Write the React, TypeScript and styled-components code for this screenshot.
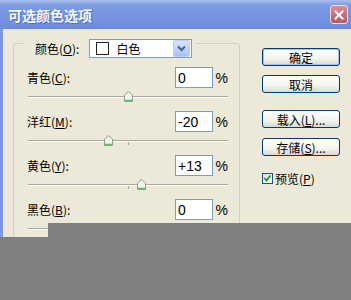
import styled, { createGlobalStyle } from 'styled-components';

const GlobalStyle = createGlobalStyle`
  html, body {
    margin: 0;
    padding: 0;
    background: #808080;
  }
  body {
    width: 351px;
    height: 300px;
    overflow: hidden;
    font-family: "Noto Sans CJK SC", "Liberation Sans", sans-serif;
  }
`;

const channels = [
  { name: '青色', key: 'C', text: '0', value: 0 },
  { name: '洋红', key: 'M', text: '-20', value: -20 },
  { name: '黄色', key: 'Y', text: '+13', value: 13 },
  { name: '黑色', key: 'B', text: '0', value: 0 },
];

const App = () => {
  return (
    <Screen>
      <GlobalStyle />
      <Window>
        <TitleBar>
          <Title>可选颜色选项</Title>
          <CloseButton>
            <svg width="10" height="10" viewBox="0 0 10 10">
              <path d="M1.5 1.5 L8.5 8.5 M8.5 1.5 L1.5 8.5" stroke="#fff" strokeWidth="2" strokeLinecap="square" />
            </svg>
          </CloseButton>
        </TitleBar>
        <Frame>
          <GroupBox>
            <Legend>
              <Label>
                颜色(<U>O</U>):
              </Label>
              <Select>
                <Swatch />
                <SelectText>白色</SelectText>
                <SelectArrow>
                  <svg width="9" height="7" viewBox="0 0 9 7">
                    <path d="M1 1.5 L4.5 5 L8 1.5" stroke="#4D6185" strokeWidth="2" fill="none" />
                  </svg>
                </SelectArrow>
              </Select>
            </Legend>
            <Rows>
              {channels.map((c) => (
                <Row key={c.key}>
                  <TopLine>
                    <Label>
                      {c.name}(<U>{c.key}</U>):
                    </Label>
                    <NumberInput readOnly value={c.text} />
                    <Percent>%</Percent>
                  </TopLine>
                  <Slider>
                    <Tick />
                    <Thumb style={{ left: `${c.value + 100 - 4.5}px` }}>
                      <svg width="9" height="11" viewBox="0 0 9 11">
                        <path d="M0.5 4 L4.5 0.5 L8.5 4 L8.5 10.5 L0.5 10.5 Z" fill="#EEF3EA" stroke="#8CA08C" />
                        <path d="M1 9.5 H8" stroke="#5CC05C" strokeWidth="1.5" />
                      </svg>
                    </Thumb>
                  </Slider>
                </Row>
              ))}
            </Rows>
          </GroupBox>
          <Side>
            <Button $isDefault $top={5}>确定</Button>
            <Button $top={9}>取消</Button>
            <Button $top={17}>
              载入(<U>L</U>)...
            </Button>
            <Button $top={10}>
              存储(<U>S</U>)...
            </Button>
            <CheckRow>
              <CheckBox>
                <svg width="9" height="9" viewBox="0 0 9 9">
                  <path d="M1.5 4 L3.5 6.5 L7.5 1.5" stroke="#21A121" strokeWidth="2" fill="none" />
                </svg>
              </CheckBox>
              <span>
                预览(<U>P</U>)
              </span>
            </CheckRow>
          </Side>
        </Frame>
      </Window>
      <Cover />
    </Screen>
  );
};

/////////////////////////////////////////////////////////////////////////////////////////

const Screen = styled.div`
  position: relative;
  width: 351px;
  height: 300px;
  overflow: hidden;
`;

const Window = styled.div`
  width: 351px;
  height: 237px;
  display: flex;
  flex-direction: column;
  background: #ece9d8;
`;

const TitleBar = styled.div`
  height: 29px;
  flex-shrink: 0;
  display: flex;
  align-items: center;
  justify-content: space-between;
  padding: 0 3px 0 8px;
  box-sizing: border-box;
  background: linear-gradient(
    to bottom,
    #a9c0f0 0%,
    #7d99e2 18%,
    #7593e0 60%,
    #6d8bdc 100%
  );
`;

const Title = styled.span`
  color: #f4f7fd;
  font-size: 14px;
  font-weight: bold;
  text-shadow: 1px 1px 0 #5670bc;
`;

const CloseButton = styled.div`
  width: 18px;
  height: 19px;
  box-sizing: border-box;
  display: flex;
  align-items: center;
  justify-content: center;
  border: 1px solid #e8dce4;
  border-radius: 3px;
  background: linear-gradient(to bottom, #d99098, #c46a74 60%, #b85c68);
`;

const Frame = styled.div`
  flex: 1;
  display: flex;
  align-items: flex-start;
  border-left: 3px solid #7b97e0;
  padding: 14px 0 0 10px;
  overflow: hidden;
`;

const GroupBox = styled.div`
  width: 227px;
  height: 220px;
  flex-shrink: 0;
  box-sizing: border-box;
  border: 1px solid #d0d0bf;
  border-radius: 3px;
  padding: 0 11px 0 13px;
`;

const Legend = styled.div`
  display: flex;
  align-items: center;
  width: fit-content;
  margin: -5px 0 0 -3px;
  padding: 0 4px 0 11px;
  gap: 10px;
  background: #ece9d8;
`;

const Label = styled.span`
  flex: 1;
  font-size: 12px;
  color: #000;
  white-space: nowrap;
`;

const U = styled.span`
  text-decoration: underline;
`;

const Select = styled.div`
  width: 103px;
  height: 19px;
  box-sizing: border-box;
  display: flex;
  align-items: center;
  border: 1px solid #7f9db9;
  background: #fff;
  padding: 0 1px 0 6px;
`;

const Swatch = styled.div`
  width: 13px;
  height: 13px;
  box-sizing: border-box;
  border: 1px solid #222;
  background: #fff;
`;

const SelectText = styled.span`
  flex: 1;
  margin-left: 7px;
  font-size: 12px;
`;

const SelectArrow = styled.div`
  width: 17px;
  height: 17px;
  box-sizing: border-box;
  display: flex;
  align-items: center;
  justify-content: center;
  border: 1px solid #b9cdf5;
  border-radius: 2px;
  background: linear-gradient(to bottom, #dbe6fd, #b6cbf7 70%, #a9c0f3);
`;

const Rows = styled.div`
  margin-top: 9px;
  display: flex;
  flex-direction: column;
`;

const Row = styled.div`
  display: flex;
  flex-direction: column;
`;

const TopLine = styled.div`
  display: flex;
  align-items: center;
  height: 21px;
`;

const NumberInput = styled.input`
  width: 38px;
  height: 21px;
  box-sizing: border-box;
  border: 1px solid #7f9db9;
  padding: 0 0 0 2px;
  margin: 0;
  outline: none;
  background: #fff;
  font-family: "Liberation Sans", sans-serif;
  font-size: 14px;
  color: #000;
`;

const Percent = styled.span`
  width: 15px;
  text-align: right;
  font-family: "Liberation Sans", sans-serif;
  font-size: 14px;
`;

const Slider = styled.div`
  position: relative;
  height: 23px;
  margin-left: 1px;
  width: 200px;

  &::before {
    content: '';
    position: absolute;
    left: 0;
    right: 0;
    top: 8px;
    height: 1px;
    background: #aca899;
  }

  &::after {
    content: '';
    position: absolute;
    left: 0;
    right: 0;
    top: 9px;
    height: 1px;
    background: #fff;
  }
`;

const Tick = styled.div`
  position: absolute;
  left: 100px;
  top: 9px;
  width: 1px;
  height: 4px;
  background: #aca899;
`;

const Thumb = styled.div`
  position: absolute;
  top: 3px;
  width: 9px;
  height: 11px;
  z-index: 1;
  line-height: 0;
`;

const Side = styled.div`
  margin-left: 22px;
  display: flex;
  flex-direction: column;
`;

const Button = styled.div<{ $isDefault?: boolean; $top: number }>`
  width: 78px;
  height: 18px;
  margin-top: ${(p) => p.$top}px;
  box-sizing: border-box;
  display: flex;
  align-items: center;
  justify-content: center;
  border: 1px solid #003c74;
  border-radius: 3px;
  background: linear-gradient(to bottom, #ffffff, #f3f3ef 60%, #dcd8cc);
  font-size: 12px;
  color: #000;
  box-shadow: ${(p) => (p.$isDefault ? 'inset 0 0 0 1px #a9c1ee' : 'none')};
`;

const CheckRow = styled.div`
  margin-top: 13px;
  height: 18px;
  display: flex;
  align-items: center;
  gap: 2px;
  font-size: 12px;
`;

const CheckBox = styled.div`
  width: 11px;
  height: 11px;
  box-sizing: border-box;
  display: flex;
  align-items: center;
  justify-content: center;
  border: 1px solid #1c5180;
  background: linear-gradient(to bottom right, #dcdcd4, #ffffff);
`;

const Cover = styled.div`
  position: absolute;
  z-index: 2;
  left: 48px;
  top: 223px;
  right: 0;
  bottom: 0;
  background: #808080;
`;

export default App;
